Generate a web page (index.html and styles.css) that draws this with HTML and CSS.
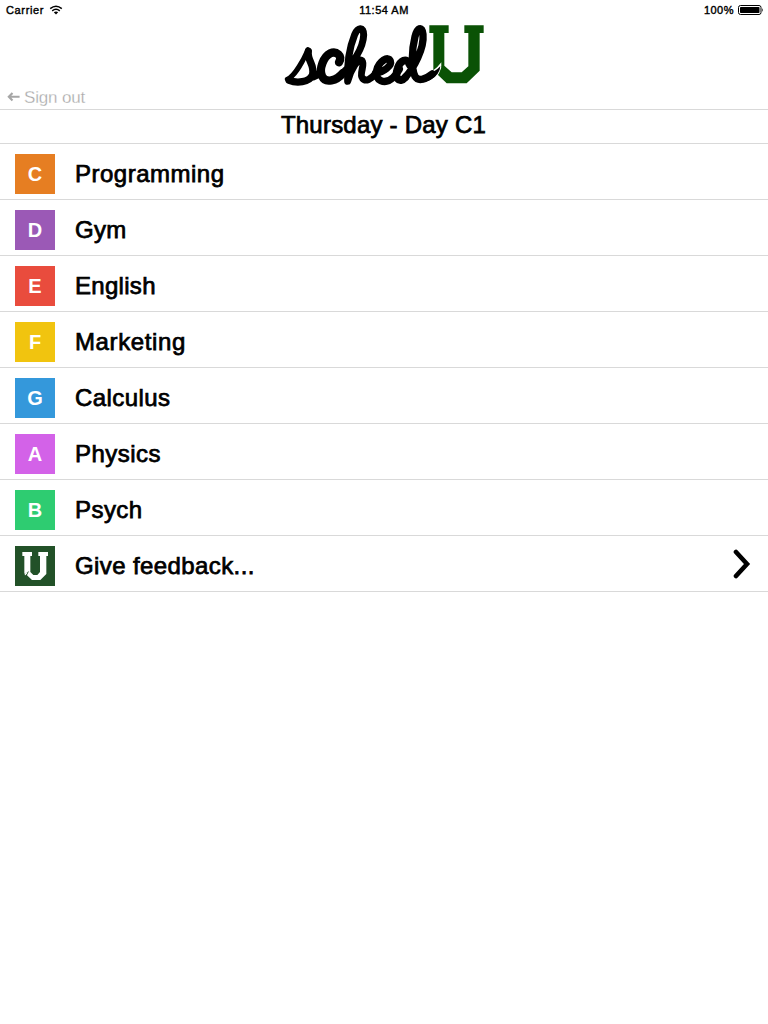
FILE: index.html
```html
<!DOCTYPE html>
<html lang="en">
<head>
<meta charset="utf-8">
<title>schedU</title>
<link rel="stylesheet" href="styles.css">
</head>
<body>
<header class="top">
  <div class="status">
    <div class="side"><span class="carrier">Carrier</span>
      <svg class="wifi" width="14" height="10" viewBox="0 0 14 10"><path d="M1.2 3.6Q7 -1.2 12.8 3.6M3.2 5.8Q7 2.8 10.8 5.8" fill="none" stroke="#000" stroke-width="1.5"/><path d="M4.8 7.2Q7 5.7 9.2 7.2L7 9.4Z"/></svg>
    </div>
    <span class="clock">11:54 AM</span>
    <div class="side right"><span class="percent">100%</span>
      <svg width="26" height="10" viewBox="0 0 26 10"><rect x=".5" y=".5" width="22.5" height="9" rx="2" fill="#fff" stroke="#000"/><rect x="2" y="2" width="19.5" height="6" rx=".8"/><path d="M24 3Q25.6 5 24 7Z"/></svg>
    </div>
  </div>
  <svg class="logo" width="210" height="70" viewBox="0 6 630 210" role="img" aria-label="schedU">
    <path fill="#0a5205" d="M448 22H506V45H493V143L515 163H545L565 145V45H553V22H611V45H599V158L560 196H500L474 171L484 140L460 157V45H448Z"/>
    <path fill="#fff" d="M424 183Q462 162 484 133Q488 166 452 190L430 198Z"/>
    <g fill="none" stroke="#000" stroke-linecap="round" stroke-linejoin="round">
      <path stroke-width="15" d="M22 184C45 174 72 122 84 95"/>
      <path stroke-width="22" d="M85 100C80 127 107 143 97 171C88 194 49 196 28 187M101 176Q112 173 117 166"/>
      <path stroke-width="25" d="M177 133C190 113 168 98 151 106C131 116 116 153 126 174C136 198 170 188 189 165"/>
      <path stroke-width="21" d="M188 166C217 139 250 91 251 51C251 24 233 29 224 50C207 92 201 146 203 190C213 153 235 118 246 128C256 139 237 169 247 180C257 193 274 183 287 166"/>
      <path stroke-width="22" d="M287 165C311 163 336 143 331 129C325 112 297 130 290 157C282 187 314 202 339 179Q350 169 358 154"/>
      <path stroke-width="23" d="M388 139C381 117 361 127 353 151C343 178 357 199 376 178"/>
      <path stroke-width="22" d="M376 178C401 151 433 92 429 49C426 22 412 29 405 56C394 100 394 152 405 175C416 193 439 182 457 168"/>
    </g>
    <path d="M442 170Q467 160 481 145Q480 169 451 186L430 193Z"/>
  </svg>
  <div class="signout">
    <svg width="13" height="10" viewBox="0 0 13 10"><path d="M5.5 1L1.8 4.8L5.5 8.6M1.8 4.8H12.6" fill="none" stroke="#a6a6a6" stroke-width="2.1"/></svg>
    <span>Sign out</span>
  </div>
</header>
<h1 class="day"><span>Thursday - Day C1</span></h1>
<main class="list">
  <div class="row"><b class="tile orange">C</b><span class="name programming">Programming</span></div>
  <div class="row"><b class="tile purple">D</b><span class="name gym">Gym</span></div>
  <div class="row"><b class="tile red">E</b><span class="name english">English</span></div>
  <div class="row"><b class="tile yellow">F</b><span class="name marketing">Marketing</span></div>
  <div class="row"><b class="tile blue">G</b><span class="name calculus">Calculus</span></div>
  <div class="row"><b class="tile pink">A</b><span class="name physics">Physics</span></div>
  <div class="row"><b class="tile green">B</b><span class="name psych">Psych</span></div>
  <div class="row">
    <svg class="tile forest" width="40" height="40" viewBox="0 0 120 120"><path fill="#fff" d="M22 18H51V30H46V78L55 87H67L75 78V30H70V18H99V30H94V84L76 102H51L36 88L39 77L28 83V30H22Z"/><path d="M29 83L38 76Q38 85 30 89" fill="#fff"/><path d="M28 91Q37 87 41 76" fill="none" stroke="#225128" stroke-width="2"/></svg>
    <span class="name feedback">Give feedback...</span>
    <svg class="chevron" width="18" height="30" viewBox="0 0 18 30"><path d="M3 3L14 15L3 27" fill="none" stroke="#000" stroke-width="4.6" stroke-linecap="round"/></svg>
  </div>
</main>
</body>
</html>
```
FILE: styles.css
```css
* { box-sizing: border-box; }
body {
  margin: 0;
  background: #fff;
  color: #000;
  font-family: "Liberation Sans", Arial, sans-serif;
}
svg { display: block; flex: none; }
.top { height: 110px; border-bottom: 1px solid #d9d9d9; }
.status {
  height: 20px;
  padding: 0 4px 0 6px;
  display: flex;
  align-items: center;
  font-size: 11px;
  line-height: 22px;
  -webkit-text-stroke: .4px #000;
}
.side { flex: 1; display: flex; align-items: center; gap: 5px; }
.carrier { letter-spacing: .65px; }
.clock { letter-spacing: .5px; margin-right: 2px; }
.percent { letter-spacing: .5px; }
.right { justify-content: flex-end; gap: 4px; }
.logo { margin: 0 0 0 280px; }
.signout {
  height: 19px;
  margin-top: -3px;
  padding-left: 7px;
  display: flex;
  align-items: center;
  gap: 4px;
  color: #a6a6a6;
  font-size: 17px;
  line-height: 21px;
  letter-spacing: -.15px;
}
.signout span {
  padding-top: 1px;
  -webkit-text-stroke: .3px #fff;
}
.day {
  margin: 0;
  height: 34px;
  padding-right: 1px;
  border-bottom: 1px solid #d9d9d9;
  text-align: center;
  font-size: 24px;
  font-weight: 400;
  line-height: 30px;
  letter-spacing: .22px;
  -webkit-text-stroke: .75px #000;
}
.row {
  height: 56px;
  padding: 4px 17px 0 15px;
  border-bottom: 1px solid #d9d9d9;
  display: flex;
  align-items: center;
}
.tile {
  width: 40px;
  height: 40px;
  margin-right: 20px;
  color: #fff;
  text-align: center;
  font-size: 20px;
  line-height: 41px;
}
.orange { background: #e67e22; }
.purple { background: #9b59b6; }
.red { background: #e94c3d; }
.yellow { background: #f1c40f; }
.blue { background: #3498db; }
.pink { background: #d362e8; }
.green { background: #2ecc71; }
.forest { background: #225128; }
.name {
  font-size: 24px;
  line-height: 40px;
  letter-spacing: .3px;
  -webkit-text-stroke: .75px #000;
}
.programming { letter-spacing: .5px; }
.marketing { letter-spacing: .62px; }
.calculus { letter-spacing: .42px; }
.physics, .psych { letter-spacing: .45px; }
.feedback { letter-spacing: .4px; }
.chevron { margin: -4px 0 0 auto; }
```
